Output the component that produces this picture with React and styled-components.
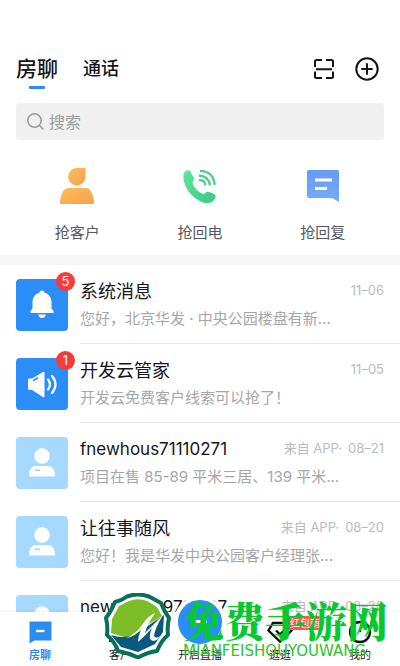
import React from "react";
import styled, { createGlobalStyle } from "styled-components";

const GlobalStyle = createGlobalStyle`
  * { box-sizing: border-box; }
  body {
    margin: 0;
    background: #fff;
    color: #15161c;
    font-family: Inter, "Noto Sans CJK SC", sans-serif;
  }
  button, input { font: inherit; color: inherit; }
  button { background: none; border: 0; padding: 0; cursor: pointer; }
  svg { display: block; flex: none; }
`;

const Page = styled.div`
  position: relative;
  display: flex;
  flex-direction: column;
  height: 100vh;
  overflow: hidden;
`;

const Header = styled.header`
  display: flex;
  align-items: flex-start;
  justify-content: space-between;
  padding: 52px 20px 0 16px;
`;

const Tabs = styled.div`
  display: flex;
  align-items: flex-start;
  gap: 25px;
`;

const Tab = styled.button`
  display: flex;
  flex-direction: column;
  align-items: center;
  line-height: 34px;
  font-size: ${(p) => (p.$active ? 21 : 18)}px;
  font-weight: 500;

  &::after {
    content: "";
    width: 16px;
    height: 3px;
    border-radius: 1px;
    background: ${(p) => (p.$active ? "#2b8cf0" : "transparent")};
  }
`;

const HeaderTools = styled.div`
  display: flex;
  align-items: center;
  gap: 18px;
  height: 34px;
`;

const Search = styled.label`
  display: flex;
  align-items: center;
  gap: 4px;
  flex: none;
  height: 37px;
  margin: 14px 16px 0;
  padding: 0 10px;
  border-radius: 4px;
  background: #f0f0f0;
  color: #999;
`;

const SearchInput = styled.input`
  flex: 1;
  min-width: 0;
  padding: 0;
  border: 0;
  outline: 0;
  background: transparent;
  font-size: 16px;
  line-height: 24px;
  &::placeholder { color: #9c9c9c; opacity: 1; }
`;

const Actions = styled.div`
  display: grid;
  grid-template-columns: repeat(3, 1fr);
  flex: none;
  height: 115px;
  padding: 26px 16px 0;
`;

const Action = styled.button`
  display: flex;
  flex-direction: column;
  align-items: center;
  gap: 16px;
  font-size: 15px;
  line-height: 22px;
  color: #555862;
`;

const List = styled.ul`
  flex: 1;
  min-height: 0;
  margin: 0;
  padding: 0;
  list-style: none;
  border-top: 10px solid #f7f7f7;
  overflow-y: auto;
  scrollbar-width: none;
`;

const Row = styled.li`
  display: flex;
  gap: 12px;
  height: 79px;
  padding-left: 16px;
`;

const Avatar = styled.div`
  position: relative;
  display: grid;
  place-items: center;
  flex: none;
  width: 52px;
  height: 52px;
  margin-top: 14px;
  border-radius: 4px;
  background: ${(p) => (p.$system ? "#2b8df8" : "#a6d9ff")};
`;

const Badge = styled.span`
  position: absolute;
  top: -7px;
  right: -7px;
  width: 19px;
  height: 19px;
  border-radius: 50%;
  background: #f93a3a;
  color: #fff;
  font-size: 13px;
  line-height: 19px;
  text-align: center;
`;

const Body = styled.div`
  flex: 1;
  min-width: 0;
  padding: 13px 16px 0 0;
  border-bottom: 1px solid #e6e6e6;
`;

const TitleLine = styled.div`
  display: flex;
  align-items: center;
  justify-content: space-between;
`;

const Title = styled.span`
  font-size: ${(p) => (p.$latin ? 17 : 18)}px;
  line-height: 27px;
`;

const Meta = styled.span`
  display: flex;
  gap: 6px;
  margin-top: -4px;
  font-size: 13px;
  line-height: 20px;
  color: #bbbbbe;
`;

const Preview = styled.div`
  margin-top: 2px;
  font-size: 15px;
  line-height: 24px;
  color: #a6a6a8;
  white-space: nowrap;
`;

const NavBar = styled.nav`
  position: relative;
  display: grid;
  grid-template-columns: repeat(5, 1fr);
  grid-template-rows: 54px;
  flex: none;
  background: #fff;
  box-shadow: 0 -1px 3px rgba(0, 0, 0, 0.06);
`;

const NavItem = styled.button`
  position: relative;
  display: flex;
  flex-direction: column;
  align-items: center;
  justify-content: flex-end;
  gap: 3px;
  padding-bottom: 3px;
  font-size: 11px;
  line-height: 16px;
  font-weight: ${(p) => (p.$active ? 700 : 400)};
  color: ${(p) => (p.$active ? "#2b8df0" : "#222")};
`;

const Live = styled.span`
  display: grid;
  place-items: center;
  flex: none;
  width: 52px;
  height: 52px;
  margin-bottom: -4px;
  border: 4px solid #fff;
  border-radius: 50%;
  background: #2b8df8;
`;

const Promo = styled.span`
  position: absolute;
  top: 4px;
  left: 47px;
  padding: 0 3px;
  border-radius: 2px;
  background: #f75a52;
  color: #fff;
  font-size: 10px;
  line-height: 14px;
  font-weight: 400;
  white-space: nowrap;
`;

const Watermark = styled.div`
  position: absolute;
  right: 12px;
  bottom: 7px;
  display: flex;
  align-items: flex-end;
  gap: 12px;
  pointer-events: none;
`;

const WatermarkText = styled.div`
  display: flex;
  flex-direction: column;
  color: #08c832;
`;

const WatermarkName = styled.span`
  font-family: "Noto Serif CJK SC", "Noto Sans CJK SC", serif;
  font-size: 41px;
  line-height: 46px;
  font-weight: 900;
`;

const WatermarkLatin = styled.span`
  font-family: "DejaVu Sans", sans-serif;
  font-size: 15px;
  line-height: 16px;
  color: #2cc42b;
`;

const ScanIcon = () => (
  <svg width="24" height="24" viewBox="0 0 24 24" fill="none" stroke="#15161c" strokeWidth="2">
    <path d="M3 10V4.500Q3 3 4.500 3H10M14 3h5.500Q21 3 21 4.500V10M3 14.500v5Q3 21 4.500 21H10M14 21h5.500Q21 21 21 19.500v-5M4 12.200h16" />
  </svg>
);

const PlusIcon = () => (
  <svg width="26" height="26" viewBox="0 0 26 26" fill="none" stroke="#15161c" strokeWidth="2" strokeLinecap="round">
    <circle cx="13" cy="13" r="10.700" />
    <path d="M8 13h10M13 8v10" />
  </svg>
);

const SearchIcon = () => (
  <svg width="19" height="19" viewBox="0 0 19 19" fill="none" stroke="#999" strokeWidth="1.500" strokeLinecap="round">
    <circle cx="8.500" cy="8.500" r="6.700" />
    <path d="M13.500 13.500 17 17" />
  </svg>
);

const CustomerIcon = () => (
  <svg width="40" height="40" viewBox="0 0 40 40">
    <defs>
      <linearGradient id="orange" x1="0" y1="0" x2="1" y2="1">
        <stop offset="0" stopColor="#fbbd5e" />
        <stop offset="1" stopColor="#f9a04b" />
      </linearGradient>
    </defs>
    <path d="M20 2h8.500v9a8.700 8.700 0 1 1-8.500-9Z" fill="url(#orange)" />
    <path d="M12 22h17q3.500 0 5 3.500 3 5.500 3 12.500H3q0-7 3-12.500Q8 22 12 22Z" fill="url(#orange)" />
  </svg>
);

const CallIcon = () => (
  <svg width="40" height="40" viewBox="0 0 40 40">
    <defs>
      <linearGradient id="green" x1="0" y1="0" x2="1" y2="1">
        <stop offset="0" stopColor="#5be79a" />
        <stop offset="1" stopColor="#3fc884" />
      </linearGradient>
    </defs>
    <path d="M3.500 9C4 6 6 4.200 8.500 4.200c1 0 1.700.8 2.200 1.800l3.200 6.300c.8 1.700-1.600 3-1.300 4.500.8 4.200 6 9.500 10.300 11 2 .7 2.800-2.200 5-2 3 .2 5.600 1.800 7 3 2 1.800-.2 5-2.400 6.700-4 3-9.500 1.800-15-1.700C9 28.500 2.500 18 3.500 9Z" fill="url(#green)" />
    <path d="M19 14q6 0 6.500 5.500M19 9.500q10 .5 11 10M20 4.800q13.500.5 14.700 14" fill="none" stroke="#4bd08c" strokeWidth="2.300" />
  </svg>
);

const ReplyIcon = () => (
  <svg width="40" height="40" viewBox="0 0 40 40">
    <defs>
      <linearGradient id="blue" x1="0" y1="0" x2="0" y2="1">
        <stop offset="0" stopColor="#669af5" />
        <stop offset="1" stopColor="#75abfb" />
      </linearGradient>
    </defs>
    <path d="M6 4h28q2 0 2 2v30l-7-4H6q-2 0-2-2V6q0-2 2-2Z" fill="url(#blue)" />
    <path d="M12 14h17M12 22.500h12" stroke="#fff" strokeWidth="3" />
  </svg>
);

const BellIcon = () => (
  <svg width="34" height="34" viewBox="0 0 34 34" fill="#fff">
    <path d="M17 2.500c1.600 0 2.400 1 2.600 2.200C24 6 26.500 9.500 26.500 14v6.500l2 2.500v2h-23v-2l2-2.500V14c0-4.500 2.500-8 6.900-9.300.2-1.200 1-2.200 2.600-2.200ZM13.200 26.500h7.600q-.8 3.500-3.800 3.500t-3.800-3.500Z" />
  </svg>
);

const SpeakerIcon = () => (
  <svg width="34" height="34" viewBox="0 0 34 34">
    <path d="M3 12.500q0-1 1-1h3L18 5q1.500-1 1.500 1v23q0 1.800-1.500 1L7 23H4q-1 0-1-1Z" fill="#fff" />
    <path d="m8.500 13.500 4-2.500" stroke="#2b8df8" strokeWidth="1.500" strokeLinecap="round" />
    <path d="M23 12.500q4 5 0 10M27 9q7 8.500 0 17" fill="none" stroke="#fff" strokeWidth="2.200" strokeLinecap="round" />
  </svg>
);

const PersonIcon = () => (
  <svg width="34" height="34" viewBox="0 0 34 34">
    <circle cx="17" cy="10" r="7.700" fill="#fff" />
    <path d="M9.500 20h15q4 1 5.500 7v3.500H4V27q1.500-6 5.500-7Z" fill="#fff" />
    <path d="M9.500 24.300h5.500" stroke="#a6d9ff" strokeWidth="1.800" />
  </svg>
);

const ChatIcon = () => (
  <svg width="24" height="24" viewBox="0 0 24 24">
    <path d="M1.500 1.500h22v19H6.500l-5 3Z" fill="#2b8df0" />
    <path d="M8 11h8.500" stroke="#fff" strokeWidth="2.300" />
  </svg>
);

const ContactIcon = () => (
  <svg width="24" height="24" viewBox="0 0 24 24" fill="none" stroke="#111" strokeWidth="2.200">
    <circle cx="12" cy="8" r="5" />
    <path d="M2 22q0-8 10-8t10 8" />
  </svg>
);

const DiamondIcon = () => (
  <svg width="26" height="24" viewBox="0 0 26 24" fill="none" stroke="#111" strokeWidth="2.400">
    <path d="M6 3h14l4.500 7.500L13 21.500 1.500 10.500Z" />
    <path d="m9 10.500 4 4 4-4" />
  </svg>
);

const ProfileIcon = () => (
  <svg width="24" height="24" viewBox="0 0 24 24" fill="none" stroke="#111" strokeWidth="2.300">
    <circle cx="12" cy="12" r="10" />
    <path d="M12 8v4" />
  </svg>
);

const MountainLogo = () => (
  <svg width="67" height="66" viewBox="0 0 67 66">
    <path d="M23 3.500Q34-.5 45 3.500L57 10Q60 18 65 25 63 34 64 42 57 48 53 58 44 59 34 64.500 25 60 14 58 11 49 3 42 4 33 2 25 8 17 11 9 17 8 23 3.500Z" fill="#fff" stroke="#08705a" strokeWidth="4" strokeLinejoin="round" />
    <path d="M24 8.500Q34 4 44 8.500L53 14 58 23 40 34 23 45 7 40 8 26 15 13Z" fill="#7dbd28" />
    <path d="M7 42Q21 47 33 40L45 32 60 22 59 39 51 51 34 59 17 54Z" fill="#075a7d" />
    <path d="M22 45Q31 42 38 32T51 20Q43 32 41 40 49 32 59 22 51 35 50 43 52 46 56 43 51 51 46 46 45 42 48 35 41 43 34 49 34 42 39 33 32 44 22 45Z" fill="#fff" />
  </svg>
);

const actions = [
  { label: "抢客户", icon: <CustomerIcon /> },
  { label: "抢回电", icon: <CallIcon /> },
  { label: "抢回复", icon: <ReplyIcon /> },
];

const chats = [
  { title: "系统消息", text: "您好，北京华发 · 中央公园楼盘有新...", date: "11–06", badge: 5, icon: <BellIcon /> },
  { title: "开发云管家", text: "开发云免费客户线索可以抢了！", date: "11–05", badge: 1, icon: <SpeakerIcon /> },
  { title: "fnewhous71110271", latin: true, text: "项目在售 85-89 平米三居、139 平米...", date: "08–21", app: true },
  { title: "让往事随风", text: "您好！我是华发中央公园客户经理张...", date: "08–20", app: true },
  { title: "newhouse9711027", latin: true, date: "08–20", app: true },
];

export default function App() {
  return (
    <Page lang="zh-CN">
      <GlobalStyle />
      <Header>
        <Tabs>
          <Tab $active>房聊</Tab>
          <Tab>通话</Tab>
        </Tabs>
        <HeaderTools>
          <button aria-label="扫一扫"><ScanIcon /></button>
          <button aria-label="添加"><PlusIcon /></button>
        </HeaderTools>
      </Header>
      <Search>
        <SearchIcon />
        <SearchInput type="search" placeholder="搜索" aria-label="搜索" />
      </Search>
      <Actions>
        {actions.map((a) => (
          <Action key={a.label}>
            {a.icon}
            {a.label}
          </Action>
        ))}
      </Actions>
      <List>
        {chats.map((c) => (
          <Row key={c.title}>
            <Avatar $system={Boolean(c.badge)}>
              {c.icon || <PersonIcon />}
              {c.badge && <Badge>{c.badge}</Badge>}
            </Avatar>
            <Body>
              <TitleLine>
                <Title $latin={c.latin}>{c.title}</Title>
                <Meta>
                  {c.app && <span>来自 APP·</span>}
                  <span>{c.date}</span>
                </Meta>
              </TitleLine>
              {c.text && <Preview>{c.text}</Preview>}
            </Body>
          </Row>
        ))}
      </List>
      <NavBar>
        <NavItem $active><ChatIcon />房聊</NavItem>
        <NavItem><ContactIcon />客户</NavItem>
        <NavItem>
          <Live>
            <svg width="24" height="24" viewBox="0 0 24 24">
              <path d="M5 11.500h14" stroke="#fff" strokeWidth="3" />
            </svg>
          </Live>
          开启直播
        </NavItem>
        <NavItem><DiamondIcon />逛逛<Promo>红包雨</Promo></NavItem>
        <NavItem><ProfileIcon />我的</NavItem>
      </NavBar>
      <Watermark>
        <MountainLogo />
        <WatermarkText>
          <WatermarkName>免费手游网</WatermarkName>
          <WatermarkLatin>MIANFEISHOUYOUWANG</WatermarkLatin>
        </WatermarkText>
      </Watermark>
    </Page>
  );
}
